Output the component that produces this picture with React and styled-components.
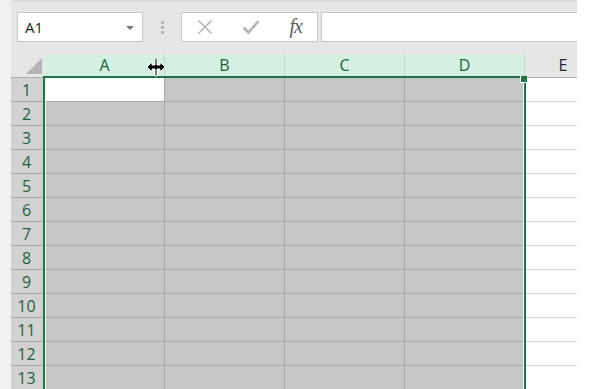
import React from 'react';
import styled, { createGlobalStyle } from 'styled-components';

const GlobalStyle = createGlobalStyle`
	html, body {
		margin: 0;
		padding: 0;
		background: #ffffff;
		overflow: hidden;
	}
	body {
		font-family: 'Segoe UI', 'Open Sans', sans-serif;
	}
`;

const GREEN = '#217346';

const Page = styled.div`
	display: flex;
	width: 608px;
	height: 389px;
	overflow: hidden;
`;

const SideStrip = styled.div`
	width: 11px;
	flex: none;
	background: #f1f1f1;
`;

const Workbook = styled.div`
	width: 566px;
	flex: none;
	display: flex;
	flex-direction: column;
	overflow: hidden;
`;

const Toolbar = styled.div`
	height: 54px;
	flex: none;
	box-sizing: border-box;
	background: #e6e6e6;
	border-top: 2px solid #dddddd;
	padding: 10px 0 0 6px;
	display: flex;
	align-items: flex-start;
`;

const Box = styled.div`
	box-sizing: border-box;
	height: 30px;
	background: #ffffff;
	border: 1px solid #c6c6c6;
	display: flex;
	align-items: center;
	flex: none;
`;

const NameBox = styled(Box)`
	width: 126px;
	padding: 0 8px 0 7px;
	justify-content: space-between;
	font-size: 15px;
	color: #222;
`;

const DropArrow = styled.span`
	width: 0;
	height: 0;
	border-left: 4px solid transparent;
	border-right: 4px solid transparent;
	border-top: 4px solid #777;
	margin-top: 2px;
`;

const Grip = styled.div`
	width: 38px;
	height: 30px;
	flex: none;
	display: flex;
	flex-direction: column;
	align-items: center;
	justify-content: center;
	gap: 2px;
	span {
		width: 3px;
		height: 3px;
		background: #b4b4b4;
	}
`;

const FormulaButtons = styled(Box)`
	width: 137px;
	padding: 0 15px 0 15px;
	justify-content: space-between;
`;

const FxLabel = styled.span`
	font-family: 'Liberation Serif', serif;
	font-style: italic;
	font-size: 20px;
	color: #606060;
	letter-spacing: -1px;
	margin-bottom: 2px;
`;

const FormulaInput = styled(Box)`
	margin-left: 3px;
	width: 300px;
	border-right: none;
`;

const Sheet = styled.div`
	position: relative;
	display: grid;
	grid-template-columns: 34px 120px repeat(3, 120px) 77px;
	grid-template-rows: 24px;
	grid-auto-rows: 24px;
	background: #ffffff;
`;

const Corner = styled.div`
	box-sizing: border-box;
	background: #e6e6e6;
	border-bottom: 1px solid #ababab;
	position: relative;
	&::after {
		content: '';
		position: absolute;
		right: 3px;
		bottom: 3px;
		width: 0;
		height: 0;
		border-left: 16px solid transparent;
		border-bottom: 16px solid #b4b4b4;
	}
`;

const ColHeader = styled.div`
	box-sizing: border-box;
	display: flex;
	align-items: center;
	justify-content: center;
	font-size: 16px;
	padding-bottom: 1px;
	background: ${p => (p.$selected ? '#d3f0e0' : '#e6e6e6')};
	color: ${p => (p.$selected ? '#1f5f3d' : '#262626')};
	border-right: 1px solid ${p => (p.$selected ? '#c3d6cb' : '#ababab')};
	border-bottom: 1px solid #ababab;
`;

const RowHeader = styled.div`
	box-sizing: border-box;
	display: flex;
	align-items: center;
	justify-content: center;
	font-size: 16px;
	color: #1f5f3d;
	background: #d2d2d2;
	border-right: 1px solid #ababab;
	border-bottom: 1px solid #a6a6a6;
	padding-right: 2px;
`;

const Cell = styled.div`
	box-sizing: border-box;
	background: ${p => (p.$active ? '#ffffff' : p.$selected ? '#c6c6c6' : '#ffffff')};
	border-right: ${p => (p.$selected ? '1px solid #a9a9a9' : 'none')};
	border-bottom: 1px solid ${p => (p.$selected ? '#a9a9a9' : '#d4d4d4')};
`;

const Selection = styled.div`
	position: absolute;
	left: 32px;
	top: 22px;
	width: 483px;
	height: 400px;
	box-sizing: border-box;
	border: 2px solid ${GREEN};
	box-shadow: inset 1px 0 0 #ffffff, inset -1px 0 0 #ffffff;
	pointer-events: none;
`;

const Handle = styled.div`
	position: absolute;
	top: -2px;
	right: -3px;
	width: 6px;
	height: 6px;
	background: ${GREEN};
	border-left: 1px solid #ffffff;
	border-bottom: 1px solid #ffffff;
`;

const ResizeCursor = styled.svg`
	position: absolute;
	left: 135px;
	top: 3px;
`;

const columns = ['A', 'B', 'C', 'D'];
const rows = Array.from({ length: 13 }, (_, i) => i + 1);

const App = () => (
	<Page>
		<GlobalStyle />
		<SideStrip />
		<Workbook>
			<Toolbar>
				<NameBox>
					A1
					<DropArrow />
				</NameBox>
				<Grip>
					<span />
					<span />
					<span />
				</Grip>
				<FormulaButtons>
					<svg width="16" height="16" viewBox="0 0 16 16">
						<path d="M1.5 1.5 L14.5 14.5 M14.5 1.5 L1.5 14.5" stroke="#b3b3b3" strokeWidth="1.6" fill="none" />
					</svg>
					<svg width="18" height="16" viewBox="0 0 18 16">
						<path d="M1.5 8.5 L6.5 13.5 L16.5 2" stroke="#b3b3b3" strokeWidth="2.6" fill="none" />
					</svg>
					<FxLabel>fx</FxLabel>
				</FormulaButtons>
				<FormulaInput />
			</Toolbar>
			<Sheet>
				<Corner />
				{columns.map(c => (
					<ColHeader key={c} $selected>{c}</ColHeader>
				))}
				<ColHeader>E</ColHeader>
				{rows.map(r => (
					<React.Fragment key={r}>
						<RowHeader>{r}</RowHeader>
						{columns.map(c => (
							<Cell key={c} $selected $active={r === 1 && c === 'A'} />
						))}
						<Cell />
					</React.Fragment>
				))}
				<Selection>
					<Handle />
				</Selection>
				<ResizeCursor width="20" height="20" viewBox="0 0 20 20">
					<path
						d="M9 1 H11 V8 H14 V5 L19 10 L14 15 V12 H11 V19 H9 V12 H6 V15 L1 10 L6 5 V8 H9 Z"
						fill="#000"
						stroke="#fff"
						strokeWidth="1"
					/>
				</ResizeCursor>
			</Sheet>
		</Workbook>
	</Page>
);

export default App;
